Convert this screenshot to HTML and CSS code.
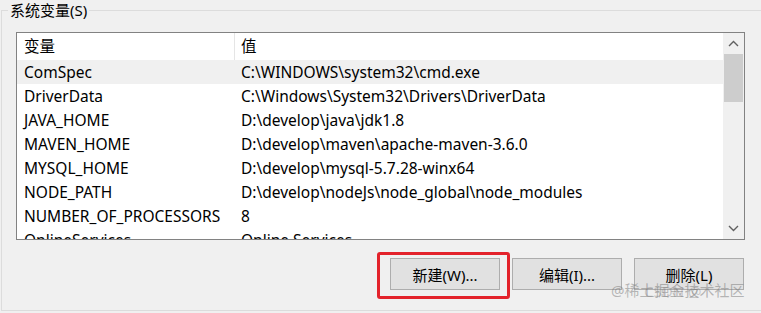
FILE: index.html
```html
<!DOCTYPE html>
<html lang="zh-CN">
<head>
    <meta charset="UTF-8">
    <title>系统变量</title>
    <link rel="stylesheet" href="styles.css">
</head>
<body>
<div class="group">
    <span class="legend">系统变量(S)</span>
    <div class="listbox">
        <div class="list">
            <div class="row head">
                <div class="name">变量</div>
                <div class="value">值</div>
            </div>
            <div class="row selected">
                <div class="name">ComSpec</div>
                <div class="value">C:\WINDOWS\system32\cmd.exe</div>
            </div>
            <div class="row">
                <div class="name">DriverData</div>
                <div class="value">C:\Windows\System32\Drivers\DriverData</div>
            </div>
            <div class="row">
                <div class="name">JAVA_HOME</div>
                <div class="value">D:\develop\java\jdk1.8</div>
            </div>
            <div class="row">
                <div class="name">MAVEN_HOME</div>
                <div class="value">D:\develop\maven\apache-maven-3.6.0</div>
            </div>
            <div class="row">
                <div class="name">MYSQL_HOME</div>
                <div class="value">D:\develop\mysql-5.7.28-winx64</div>
            </div>
            <div class="row">
                <div class="name">NODE_PATH</div>
                <div class="value">D:\develop\nodeJs\node_global\node_modules</div>
            </div>
            <div class="row">
                <div class="name">NUMBER_OF_PROCESSORS</div>
                <div class="value">8</div>
            </div>
            <div class="row">
                <div class="name">OnlineServices</div>
                <div class="value">Online Services</div>
            </div>
        </div>
        <div class="scrollbar">
            <div class="arrow">
                <svg width="11" height="7" viewBox="0 0 11 7"><path d="M1 6 L5.5 1.5 L10 6" fill="none" stroke="#606060" stroke-width="1.4"/></svg>
            </div>
            <div class="track">
                <div class="thumb"></div>
            </div>
            <div class="arrow">
                <svg width="11" height="7" viewBox="0 0 11 7"><path d="M1 1 L5.5 5.5 L10 1" fill="none" stroke="#606060" stroke-width="1.4"/></svg>
            </div>
        </div>
    </div>
    <div class="buttons">
        <button class="btn current">新建(W)...<span class="mark"></span></button>
        <button class="btn">编辑(I)...</button>
        <button class="btn">删除(L)</button>
    </div>
    <div class="watermark">
        <span class="wm-a">@稀土掘金技术社区</span>
        <span class="wm-b">CSDN @</span>
    </div>
</div>
</body>
</html>
```
FILE: styles.css
```css
* {
    margin: 0;
    padding: 0;
    box-sizing: border-box;
}
html, body {
    overflow: hidden;
}
body {
    width: 761px;
    height: 313px;
    background: #f0f0f0;
    font-family: "Noto Sans", "Noto Sans CJK SC", sans-serif;
    font-size: 15.5px;
    color: #000;
    padding: 10px 0 0 1px;
}
.group {
    position: relative;
    width: 800px;
    height: 301px;
    border: 1px solid #dcdcdc;
    border-right: none;
}
.legend {
    display: block;
    width: max-content;
    height: 20px;
    line-height: 20px;
    margin: -11px 0 0 6px;
    padding: 0 2px;
    background: #f0f0f0;
    font-size: 15px;
}
.listbox {
    display: flex;
    width: 729px;
    height: 208px;
    margin: 12px 0 0 14px;
    border: 1px solid #828282;
    background: #fff;
}
.list {
    flex: 1;
    overflow: hidden;
}
.row {
    display: flex;
    height: 24px;
    line-height: 24px;
    white-space: nowrap;
}
.row.head {
    height: 27px;
    line-height: 27px;
}
.row.selected {
    background: #f0f0f0;
}
.name {
    width: 218px;
    padding-left: 7px;
}
.head .name {
    border-right: 1px solid #e5e5e5;
}
.value {
    padding-left: 6px;
}
.scrollbar {
    display: flex;
    flex-direction: column;
    width: 21px;
    background: #f0f0f0;
}
.arrow {
    height: 21px;
    display: flex;
    align-items: center;
    justify-content: center;
}
.track {
    flex: 1;
    padding: 0 1px;
}
.thumb {
    height: 48px;
    background: #cdcdcd;
}
.buttons {
    display: flex;
    justify-content: flex-end;
    gap: 12px;
    width: 742px;
    margin-top: 18px;
}
.btn {
    position: relative;
    width: 110px;
    height: 32px;
    border: 1px solid #adadad;
    background: #e1e1e1;
    font: inherit;
    font-size: 15px;
    color: #000;
}
.mark {
    position: absolute;
    left: -14px;
    top: -7px;
    width: 133px;
    height: 47px;
    border: 3px solid #e3222b;
    border-radius: 3px;
}
.watermark {
    position: absolute;
    left: 609px;
    top: 268px;
    width: 145px;
    height: 22px;
    font-size: 15px;
    color: rgba(120, 120, 120, 0.5);
}
.wm-a, .wm-b {
    position: absolute;
    top: 0;
    white-space: nowrap;
}
.wm-a {
    left: 0;
}
.wm-b {
    left: 33px;
    top: 2px;
    color: rgba(120, 120, 120, 0.35);
}
```
